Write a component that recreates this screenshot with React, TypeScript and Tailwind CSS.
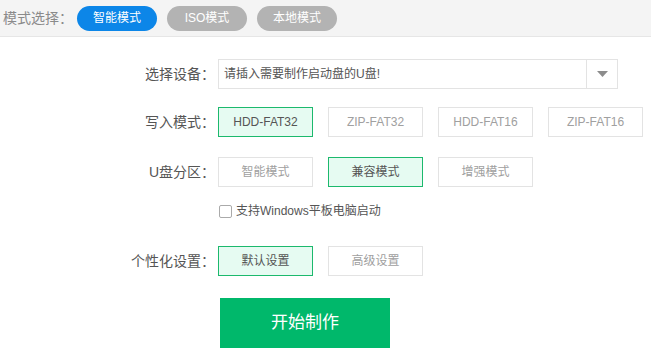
import type React from "react";

const font = { fontFamily: '"Liberation Sans", "Noto Sans CJK SC", sans-serif' };

const OptionButton: React.FC<{ label: string; active?: boolean }> = ({ label, active }) => (
	<div
		className={
			active
				? "w-[95px] h-[30px] flex items-center justify-center border border-[#1cb96d] bg-[#e6fbf2] text-[12px] text-[#555]"
				: "w-[95px] h-[30px] flex items-center justify-center border border-[#e3e3e3] bg-white text-[12px] text-[#a0a0a0]"
		}
	>
		{label}
	</div>
);

const Row: React.FC<{ label: string; className?: string; children: React.ReactNode }> = ({ label, className, children }) => (
	<div className={`flex items-center ${className ?? ""}`}>
		<div className="w-[216px] text-right text-[14px] text-[#555] pr-[1px]">{label}</div>
		<div className="ml-[2px] flex items-center gap-[15px]">{children}</div>
	</div>
);

export default function App() {
	return (
		<div className="w-[651px] h-[353px] bg-white overflow-hidden" style={font}>
			<div className="h-[37px] bg-[#f4f4f4] border-b border-[#e6e6e6] flex items-center">
				<span className="pl-[3px] text-[14px] text-[#8a8a8a] w-[77px]">模式选择：</span>
				<div className="flex gap-[10px]">
					<div className="w-[80px] h-[25px] rounded-full bg-[#0c86e8] text-white text-[12px] flex items-center justify-center">智能模式</div>
					<div className="w-[80px] h-[25px] rounded-full bg-[#b3b3b3] text-white text-[12px] flex items-center justify-center">ISO模式</div>
					<div className="w-[80px] h-[25px] rounded-full bg-[#b3b3b3] text-white text-[12px] flex items-center justify-center">本地模式</div>
				</div>
			</div>

			<Row label="选择设备：" className="mt-[22px]">
				<div className="w-[400px] h-[30px] border border-[#e3e3e3] flex">
					<div className="flex-1 flex items-center pl-[5px] text-[12px] text-[#555]">请插入需要制作启动盘的U盘!</div>
					<div className="w-[31px] border-l border-[#e3e3e3] flex items-center justify-center">
						<svg width="11" height="6" viewBox="0 0 11 6">
							<path d="M0 0 L11 0 L5.5 6 Z" fill="#8c8c8c" />
						</svg>
					</div>
				</div>
			</Row>

			<Row label="写入模式：" className="mt-[18px]">
				<OptionButton label="HDD-FAT32" active />
				<OptionButton label="ZIP-FAT32" />
				<OptionButton label="HDD-FAT16" />
				<OptionButton label="ZIP-FAT16" />
			</Row>

			<Row label="U盘分区：" className="mt-[20px]">
				<OptionButton label="智能模式" />
				<OptionButton label="兼容模式" active />
				<OptionButton label="增强模式" />
			</Row>

			<div className="mt-[15px] ml-[219px] flex items-center gap-[4px]">
				<div className="w-[13px] h-[13px] border border-[#aaa] rounded-[2px] bg-white" />
				<span className="text-[12px] text-[#555]">支持Windows平板电脑启动</span>
			</div>

			<Row label="个性化设置：" className="mt-[26px]">
				<OptionButton label="默认设置" active />
				<OptionButton label="高级设置" />
			</Row>

			<div className="mt-[22px] ml-[220px] w-[170px] h-[50px] bg-[#00b86b] text-white text-[17px] flex items-center justify-center">
				开始制作
			</div>
		</div>
	);
}
